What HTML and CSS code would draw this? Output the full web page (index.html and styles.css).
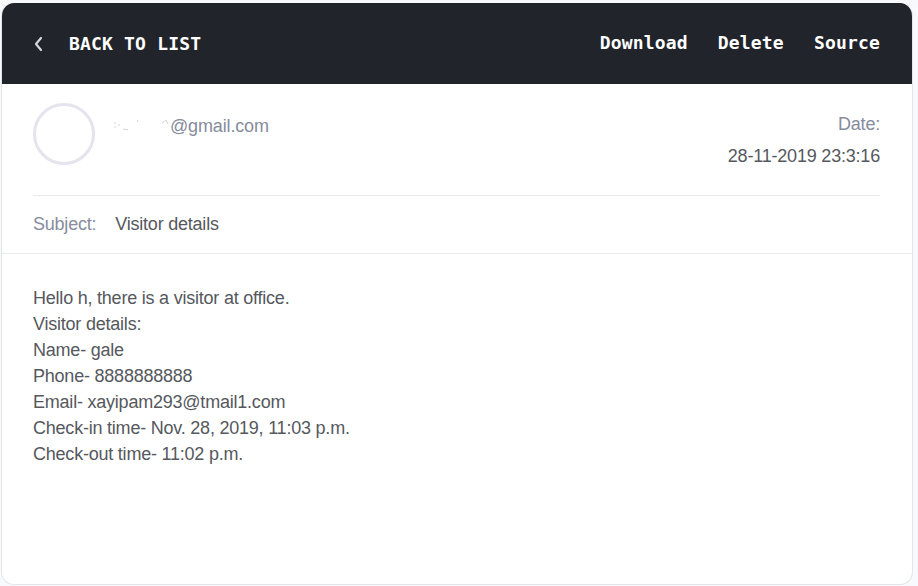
FILE: index.html
```html
<!DOCTYPE html>
<html lang="en"><head><meta charset="utf-8"><title>Visitor details</title><link rel="stylesheet" href="styles.css"></head>
<body>
<main class="mail">
<header class="bar">
<a class="back"><svg class="chevron" width="10" height="16" viewBox="0 0 10 16"><path d="M8 2 3 8 8 14"/></svg><span>BACK TO LIST</span></a>
<nav class="actions"><a>Download</a><a>Delete</a><a>Source</a></nav>
</header>
<section class="sender">
<div class="avatar"></div>
<div class="address"><svg class="smudge" width="56" height="18" viewBox="0 0 56 18"><path d="M1 7h2M1 11h2M5 9h2M10 13l5 1M24 6l1-2M49 7l4-3 2 4"/></svg><span>@gmail.com</span></div>
<div class="date"><span class="label">Date:</span><span>28-11-2019 23:3:16</span></div>
</section>
<section class="subject"><span class="label">Subject:</span><span>Visitor details</span></section>
<article class="body">Hello h, there is a visitor at office.<br>Visitor details:<br>Name- gale<br>Phone- 8888888888<br>Email- xayipam293@tmail1.com<br>Check-in time- Nov. 28, 2019, 11:03 p.m.<br>Check-out time- 11:02 p.m.</article>
</main>
</body></html>
```
FILE: styles.css
```css
* { box-sizing: border-box; }
body { margin: 0; padding: 3px 5px 1px 1px; height: 586px; background: #f8f9fc; color: #55585d; font: 18px/26px "Liberation Sans", Arial, sans-serif; letter-spacing: -0.22px; }
.mail { height: 582px; border: 1px solid #e4e5e9; border-top: 0; border-radius: 13px; background: #fff; overflow: hidden; }
.bar { height: 81px; padding: 0 32px 0 31px; display: flex; justify-content: space-between; align-items: center; background: #21242b; color: #fff; font: bold 18px/26px "DejaVu Sans Mono", monospace; letter-spacing: 0.18px; }
.back { display: flex; align-items: center; gap: 26px; }
.chevron { fill: none; stroke: #d5d6dc; stroke-width: 2.2; stroke-linecap: round; stroke-linejoin: round; }
.actions { display: flex; gap: 30px; padding-bottom: 2px; }
.sender { height: 112px; margin: 0 32px 0 31px; padding-top: 19px; display: flex; border-bottom: 1px solid #e8e9ed; }
.avatar { width: 62px; height: 62px; border: 3px solid #e4e3ee; border-radius: 50%; }
.address { display: flex; height: 26px; margin: 10px 0 0 18px; color: #868c9d; letter-spacing: -0.15px; }
.smudge { margin-top: 3px; margin-right: 1px; fill: none; stroke: #d0d3da; }
.date { margin: 5px 0 0 auto; display: flex; flex-direction: column; align-items: flex-end; line-height: 32px; letter-spacing: -0.2px; }
.label { color: #868c9d; }
.subject { height: 58px; padding: 0 31px; display: flex; gap: 19px; line-height: 56px; border-bottom: 1px solid #e8e9ed; }
.body { padding: 31px; }
```
